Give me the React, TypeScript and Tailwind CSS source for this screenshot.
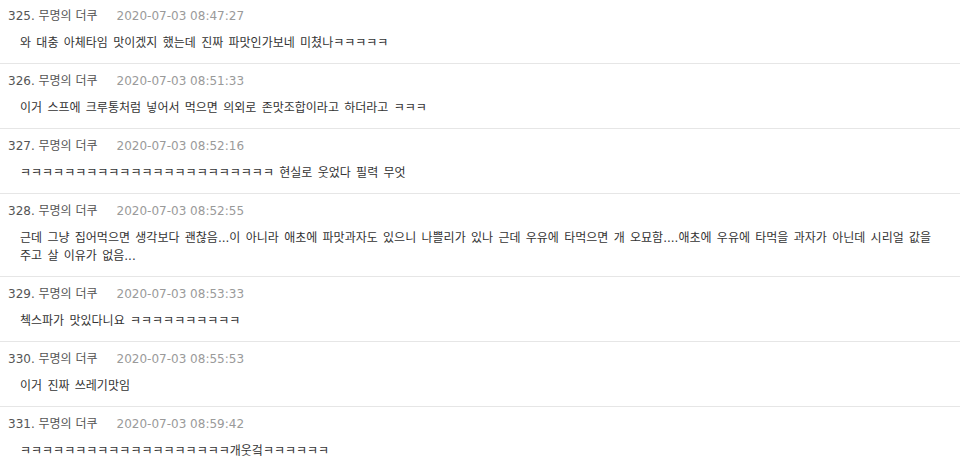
import React from "react";

type Post = { no: number; date: string; body: React.ReactNode };

const posts: Post[] = [
  { no: 325, date: "2020-07-03 08:47:27", body: "와 대충 아체타임 맛이겠지 했는데 진짜 파맛인가보네 미쳤나ㅋㅋㅋㅋㅋ" },
  { no: 326, date: "2020-07-03 08:51:33", body: "이거 스프에 크루통처럼 넣어서 먹으면 의외로 존맛조합이라고 하더라고 ㅋㅋㅋ" },
  { no: 327, date: "2020-07-03 08:52:16", body: "ㅋㅋㅋㅋㅋㅋㅋㅋㅋㅋㅋㅋㅋㅋㅋㅋㅋㅋㅋㅋㅋㅋㅋ 현실로 웃었다 필력 무엇" },
  {
    no: 328,
    date: "2020-07-03 08:52:55",
    body: (
      <>
        근데 그냥 집어먹으면 생각보다 괜찮음...이 아니라 애초에 파맛과자도 있으니 나쁠리가 있나 근데 우유에 타먹으면 개 오묘함....애초에 우유에 타먹을 과자가 아닌데 시리얼 값을
        <br />
        주고 살 이유가 없음...
      </>
    ),
  },
  { no: 329, date: "2020-07-03 08:53:33", body: "첵스파가 맛있다니요 ㅋㅋㅋㅋㅋㅋㅋㅋㅋㅋ" },
  { no: 330, date: "2020-07-03 08:55:53", body: "이거 진짜 쓰레기맛임" },
  { no: 331, date: "2020-07-03 08:59:42", body: "ㅋㅋㅋㅋㅋㅋㅋㅋㅋㅋㅋㅋㅋㅋㅋㅋㅋㅋㅋ개웃겈ㅋㅋㅋㅋㅋㅋ" },
];

export default function App() {
  return (
    <div className="w-[960px] h-[471px] overflow-hidden bg-white font-['DejaVu_Sans','Noto_Sans_CJK_KR',sans-serif]">
      {posts.map((p, i) => (
        <div
          key={p.no}
          className={`border-b border-[#e6e6e6] pb-[11px] ${i === 0 ? "pt-[7px]" : "pt-[8px]"}`}
        >
          <div className="flex items-center h-[18px] pl-[8px] text-[12px] leading-[18px] whitespace-nowrap">
            <span className="text-[#555]">{p.no}. 무명의 더쿠</span>
            <span className="ml-[19px] text-[#9a9a9a]">{p.date}</span>
          </div>
          <div className="mt-[9px] pl-[20px] pr-[4px] text-[12px] leading-[18px] text-[#333] [word-spacing:1.5px]">
            {p.body}
          </div>
        </div>
      ))}
    </div>
  );
}
